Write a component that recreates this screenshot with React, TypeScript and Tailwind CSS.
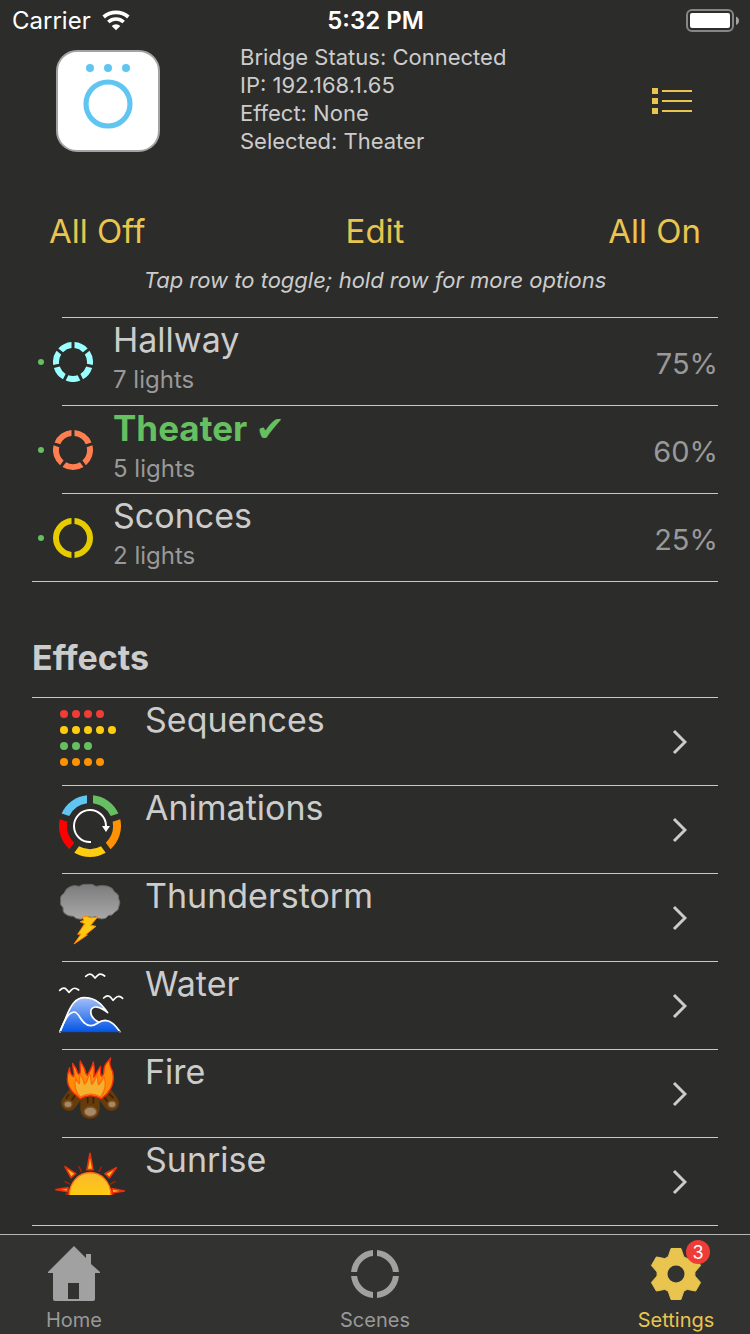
import React, { useState } from 'react';

interface Room {
  name: string;
  lights: number;
  level: number;
  color: string;
}

interface Effect {
  name: string;
  icon: React.ReactNode;
}

interface RingProps {
  size: number;
  stroke: number;
  gap: number;
  colors: string[];
}

// Ring split into equal arcs, one per colour, with a gap centred at 12 o'clock
const Ring: React.FC<RingProps> = ({ size, stroke, gap, colors }) => {
  const c = size / 2;
  const outer = c;
  const inner = c - stroke;
  const step = (Math.PI * 2) / colors.length;
  const at = (r: number, a: number) => `${c + r * Math.sin(a)} ${c - r * Math.cos(a)}`;
  const go = Math.asin(gap / 2 / outer);
  const gi = Math.asin(gap / 2 / inner);

  return (
    <svg width={size} height={size} viewBox={`0 0 ${size} ${size}`} className="shrink-0" aria-hidden="true">
      {colors.map((color, i) => {
        const a = i * step;
        const b = a + step;
        return (
          <path
            key={i}
            fill={color}
            d={`M${at(outer, a + go)}A${outer} ${outer} 0 0 1 ${at(outer, b - go)}L${at(inner, b - gi)}A${inner} ${inner} 0 0 0 ${at(inner, a + gi)}Z`}
          />
        );
      })}
    </svg>
  );
};

const WifiIcon = () => (
  <svg width="28" height="21" viewBox="0 0 84 63" fill="none" stroke="#fff" strokeWidth="11" aria-hidden="true">
    <path d="M5 21A56 56 0 0 1 79 21" />
    <path d="M19 36A34 34 0 0 1 65 36" />
    <path d="M42 61L29 48A19 19 0 0 1 55 48Z" fill="#fff" stroke="none" />
  </svg>
);

const BatteryIcon = () => (
  <svg width="53" height="24" viewBox="0 0 53 24" aria-hidden="true">
    <rect x="1" y="1" width="46" height="21" rx="5" fill="none" stroke="#868686" strokeWidth="2" />
    <rect x="4" y="4" width="40" height="15" rx="2" fill="#fff" />
    <path d="M50 7.500C54 9 54 14.500 50 16Z" fill="#a5a5a5" />
  </svg>
);

const LogoIcon = () => (
  <svg width="104" height="102" viewBox="0 0 104 102" role="img" aria-label="App logo">
    <rect x="1" y="1" width="102" height="100" rx="20" fill="#fff" stroke="#a3a3a3" strokeWidth="2" />
    <g fill="#61c5f1">
      <circle cx="34" cy="18" r="4" />
      <circle cx="52" cy="18" r="4" />
      <circle cx="70" cy="18" r="4" />
    </g>
    <circle cx="52" cy="54" r="22" fill="none" stroke="#61c5f1" strokeWidth="5.200" />
  </svg>
);

const ListIcon = () => (
  <svg width="40" height="26" viewBox="0 0 40 26" fill="#e9c550" aria-hidden="true">
    <path d="M0 0h6v6H0zM0 10h6v6H0zM0 20h6v6H0zM10 2h30v2H10zM10 12h30v2H10zM10 22h30v2H10z" />
  </svg>
);

const Chevron = () => (
  <svg width="15" height="26" viewBox="0 0 15 26" fill="none" stroke="#ccc" strokeWidth="3" aria-hidden="true">
    <path d="M2 2l11 11L2 24" />
  </svg>
);

const SequencesIcon = () => {
  const lines = [
    { color: '#f03c36', count: 4 },
    { color: '#ffcc10', count: 5 },
    { color: '#66bf60', count: 3 },
    { color: '#ff9202', count: 4 },
  ];
  return (
    <svg width="72" height="72" viewBox="0 0 72 72" aria-hidden="true">
      {lines.map((line, y) =>
        Array.from({ length: line.count }, (_, x) => (
          <circle key={`${x}-${y}`} cx={10 + x * 12} cy={12 + y * 16} r="4" fill={line.color} />
        ))
      )}
    </svg>
  );
};

const AnimationsIcon = () => (
  <div className="grid size-[72px] place-items-center *:[grid-area:1/1]">
    <Ring size={62} stroke={8} gap={6} colors={['#66bf60', '#ff9202', '#ffcc10', '#ff0000', '#61c5f1']} />
    <svg width="40" height="40" viewBox="0 0 40 40" aria-hidden="true">
      <path d="M21 36A16 16 0 1 1 36 20" fill="none" stroke="#fff" strokeWidth="2" />
      <path d="M32 20h8l-4 6z" fill="#fff" />
    </svg>
  </div>
);

const StormIcon = () => (
  <svg width="72" height="72" viewBox="42 15 216 216" aria-hidden="true">
    <defs>
      <linearGradient id="cloud" x1="0" y1="0" x2="0" y2="1">
        <stop offset="0" stopColor="#7b7b7b" />
        <stop offset="1" stopColor="#a9a9a9" />
      </linearGradient>
    </defs>
    <path
      d="M72 61Q77 45 93 40Q104 35 117 40Q128 32 143 34Q157 31 168 40Q184 36 201 39Q218 42 224 57Q238 64 236 77Q243 88 237 99Q237 112 225 117Q216 130 206 127Q198 139 186 138Q174 138 167 131Q157 135 143 131Q131 135 123 139Q107 139 100 130Q84 130 76 123Q67 118 69 103Q59 97 62 83Q59 68 72 61Z"
      fill="url(#cloud)"
      stroke="#666"
      strokeWidth="3"
    />
    <path
      d="M127 132Q139 127 151 134Q162 135 173 132L152 157L168 160L137 185L142 186L102 213L123 183L113 184L134 152L120 146L132 142Z"
      fill="#ffc813"
      stroke="#ff8800"
      strokeWidth="3"
    />
  </svg>
);

const WaterIcon = () => (
  <svg width="72" height="72" viewBox="42 15 216 216" aria-hidden="true">
    <defs>
      <linearGradient id="sea" gradientUnits="userSpaceOnUse" x1="0" y1="110" x2="0" y2="212">
        <stop offset="0" stopColor="#a3c0fa" />
        <stop offset="1" stopColor="#0556e5" />
      </linearGradient>
    </defs>
    <g stroke="#fff" strokeWidth="5" strokeLinejoin="round" strokeLinecap="round" fill="none">
      <path d="M137 46Q149 34 158 43L165 51L173 43Q182 35 194 45" />
      <path d="M59 88Q71 77 79 85L87 94L95 86Q104 77 116 87" />
      <path d="M191 111Q203 100 212 109L219 118L226 111Q237 101 248 112" />
      <path
        d="M60 212L76 174C91 135 105 108 137 110C169 111 188 134 203 155C180 136 158 132 153 148C150 163 162 176 178 184C197 170 219 181 240 212Z"
        fill="url(#sea)"
        stroke="none"
      />
      <path d="M60 212L76 174C91 135 105 108 137 110C169 111 188 134 203 155C180 136 158 132 153 148C150 163 162 176 175 183" />
      <path d="M60 212C72 182 84 154 102 153C119 152 123 194 152 194C169 195 175 178 195 178C216 179 228 197 240 212" />
      <path d="M60 212H240" stroke="#0556e5" strokeWidth="3" />
    </g>
  </svg>
);

const FireIcon = () => (
  <svg width="72" height="72" viewBox="42 15 216 216" aria-hidden="true">
    <g strokeLinecap="round">
      <path d="M106 136L87 162M195 136L214 162" stroke="#673c0b" strokeWidth="47" />
      <path d="M150 148V181" stroke="#673c0b" strokeWidth="58" />
      <path d="M86 137L79 147M105 139L96 152M188 139L201 156M209 136L219 146M143 145V161M160 145V162" stroke="#3d2207" strokeWidth="5" />
    </g>
    <ellipse cx="84" cy="166" rx="12" ry="10" fill="#a48969" stroke="#805329" strokeWidth="4" />
    <ellipse cx="216" cy="166" rx="12" ry="10" fill="#a48969" stroke="#805329" strokeWidth="4" />
    <ellipse cx="151" cy="188" rx="19" ry="14" fill="#a48969" stroke="#805329" strokeWidth="4" />
    <path
      d="M121 149C102 134 82 118 82 91C81 76 86 65 89 56C89 74 96 80 101 83C105 72 97 59 98 43C104 53 110 57 111 67C114 75 116 77 119 77C124 64 118 51 121 36C126 48 136 56 137 72L142 79C149 66 157 54 160 39C163 55 165 67 161 84C171 76 173 62 182 52C181 68 180 77 185 82C197 75 188 64 194 52C197 42 206 36 212 27C206 43 211 54 218 68C225 101 213 128 184 149C162 137 141 137 121 149Z"
      fill="#ff8c06"
      stroke="#f42b12"
      strokeWidth="4"
      strokeLinejoin="round"
    />
    <path
      d="M121 144C102 126 102 107 107 85C109 97 114 101 118 104C120 94 117 84 120 76C130 87 130 97 134 105C145 96 140 86 149 75C155 86 151 97 155 106C164 98 166 85 173 77C174 90 172 100 176 107C184 101 186 91 192 82C200 104 194 128 182 144C161 132 141 133 121 144Z"
      fill="#f5b02e"
      stroke="#ff6a0b"
      strokeWidth="4"
      strokeLinejoin="round"
    />
  </svg>
);

const SunriseIcon = () => (
  <svg width="72" height="72" viewBox="42 15 216 216" aria-hidden="true">
    <defs>
      <linearGradient id="sun" x1="0" y1="0" x2="0" y2="1">
        <stop offset="0" stopColor="#f8b82d" />
        <stop offset="1" stopColor="#ffcb13" />
      </linearGradient>
    </defs>
    <g stroke="#b51d08" strokeWidth="4" strokeLinecap="round">
      <path d="M117 89L124 103M184 90L177 103M75 134L89 141M225 133L212 141M77 171H90M212 171H222" />
    </g>
    <path d="M82 174A69 70 0 0 1 218 174Z" fill="#dd2507" />
    <g fill="#ffb220" stroke="#e9300b" strokeWidth="5" strokeLinejoin="round">
      <path d="M141 98L150 49L159 98Z" />
      <path d="M93 122L75 89L107 110Z" />
      <path d="M195 110L229 92L208 122Z" />
      <path d="M83 164L48 158L84 152Z" />
      <path d="M217 168L253 162L216 155Z" />
    </g>
    <path d="M88 174A62 67 0 0 1 213 174Z" fill="url(#sun)" />
    <path d="M88 174A62 67 0 0 1 213 174" fill="none" stroke="#ff6a11" strokeWidth="4" />
  </svg>
);

const HomeIcon = () => (
  <svg width="54" height="56" viewBox="0 0 54 56" fill="#a1a1a1" aria-hidden="true">
    <path
      fillRule="evenodd"
      d="M27 0L39 12V8H44V18L53 26V27H48V53Q48 55 46 55H8Q6 55 6 53V27H1V26ZM21 37V53H32V37Z"
    />
  </svg>
);

const GearIcon = () => {
  const point = (r: number, deg: number) => {
    const a = (deg * Math.PI) / 180;
    return `${28 + r * Math.sin(a)},${28 - r * Math.cos(a)}`;
  };
  const points = [0, 60, 120, 180, 240, 300]
    .map(a => [point(19, a - 24), point(26, a - 11), point(26, a + 11), point(19, a + 24)].join(' '))
    .join(' ');
  return (
    <svg width="56" height="56" viewBox="0 0 56 56" aria-hidden="true">
      <polygon points={points} fill="#e9c550" stroke="#e9c550" strokeWidth="1" strokeLinejoin="round" />
      <circle cx="28" cy="28" r="8.500" fill="#323230" />
    </svg>
  );
};

const rooms: Room[] = [
  { name: 'Hallway', lights: 7, level: 75, color: '#99ffff' },
  { name: 'Theater', lights: 5, level: 60, color: '#ff7f50' },
  { name: 'Sconces', lights: 2, level: 25, color: '#e6cb00' },
];

const effects: Effect[] = [
  { name: 'Sequences', icon: <SequencesIcon /> },
  { name: 'Animations', icon: <AnimationsIcon /> },
  { name: 'Thunderstorm', icon: <StormIcon /> },
  { name: 'Water', icon: <WaterIcon /> },
  { name: 'Fire', icon: <FireIcon /> },
  { name: 'Sunrise', icon: <SunriseIcon /> },
];

const App: React.FC = () => {
  const [selected, setSelected] = useState('Theater');

  return (
    <div className="flex min-h-screen flex-col bg-[#2c2c2a] font-['Inter',sans-serif] text-[#ccc]">
      <div className="grid h-10 grid-cols-3 items-center pt-px pr-[11px] pl-3 text-[24px] text-white">
        <div className="flex items-center gap-[11px]">
          <span>Carrier</span>
          <WifiIcon />
        </div>
        <span className="text-center font-semibold">5:32 PM</span>
        <div className="flex justify-end">
          <BatteryIcon />
        </div>
      </div>

      <header className="flex items-center pt-[3px] pr-[58px] pl-14">
        <LogoIcon />
        <div className="ml-20 flex-1 pb-1 text-[22px] leading-7">
          <p>Bridge Status: Connected</p>
          <p>IP: 192.168.1.65</p>
          <p>Effect: None</p>
          <p>Selected: {selected}</p>
        </div>
        <button type="button" aria-label="Menu">
          <ListIcon />
        </button>
      </header>

      <main className="flex-1 px-8 pb-2">
        <div className="mt-12 grid h-12 grid-cols-3 items-center px-[17px] text-[33px] text-[#e9c550]">
          <button type="button" className="justify-self-start">All Off</button>
          <button type="button" className="justify-self-center">Edit</button>
          <button type="button" className="justify-self-end">All On</button>
        </div>
        <p className="mt-[9px] text-center text-[22px] leading-8 italic">Tap row to toggle; hold row for more options</p>

        <ul className="mt-[21px] border-b border-[#c8c8c8]">
          {rooms.map(room => (
            <li key={room.name}>
              <div className="ml-[30px] h-px bg-[#c8c8c8]" />
              <button
                type="button"
                onClick={() => setSelected(room.name)}
                className="flex h-[87px] w-full items-center pl-[6px] text-left"
              >
                <span className="mr-[9px] size-[6px] rounded-full bg-[#66bf60]" />
                <Ring size={40} stroke={6} gap={3} colors={Array(room.lights).fill(room.color)} />
                <span className="ml-5 flex-1 self-start">
                  {selected === room.name ? (
                    <span className="block text-[35px] leading-11 font-bold text-[#66bf60]">
                      {room.name} <span className="font-['DejaVu_Sans'] font-normal">✔</span>
                    </span>
                  ) : (
                    <span className="block text-[34px] leading-11">{room.name}</span>
                  )}
                  <span className="block text-[24px] leading-9 text-[#999]">{room.lights} lights</span>
                </span>
                <span className="pt-1 text-[29px] text-[#999]">{room.level}%</span>
              </button>
            </li>
          ))}
        </ul>

        <h2 className="mt-[54px] text-[34px] leading-11 font-bold">Effects</h2>
        <ul className="mt-[17px] border-y border-[#c8c8c8]">
          {effects.map((effect, i) => (
            <li key={effect.name}>
              {i > 0 && <div className="ml-[30px] h-px bg-[#c8c8c8]" />}
              <button type="button" className="flex h-[87px] w-full items-center pr-[31px] pl-[22px] text-left">
                <span className="self-start pt-1">{effect.icon}</span>
                <span className="ml-[19px] flex-1 self-start text-[34px] leading-11">{effect.name}</span>
                <Chevron />
              </button>
            </li>
          ))}
        </ul>
      </main>

      <nav className="flex h-[100px] justify-between border-t border-[#b5b9b5] bg-[#323230] text-[20px] text-[#999]">
        <button type="button" className="flex w-[148px] flex-col items-center pt-[11px]">
          <span className="flex h-14 items-center">
            <HomeIcon />
          </span>
          <span className="mt-1 leading-7">Home</span>
        </button>
        <button type="button" className="flex w-[148px] flex-col items-center pt-[11px]">
          <span className="flex h-14 items-center">
            <Ring size={48} stroke={6} gap={4} colors={Array(4).fill('#a1a1a1')} />
          </span>
          <span className="mt-1 leading-7">Scenes</span>
        </button>
        <button type="button" className="flex w-[148px] flex-col items-center pt-[11px] text-[#e9c550]">
          <span className="relative flex h-14 items-center">
            <GearIcon />
            <span className="absolute -top-1.5 -right-1.5 flex size-6 items-center justify-center rounded-full bg-[#f03c36] text-[18px] text-white">
              3
            </span>
          </span>
          <span className="mt-1 leading-7">Settings</span>
        </button>
      </nav>
    </div>
  );
};

export default App;
